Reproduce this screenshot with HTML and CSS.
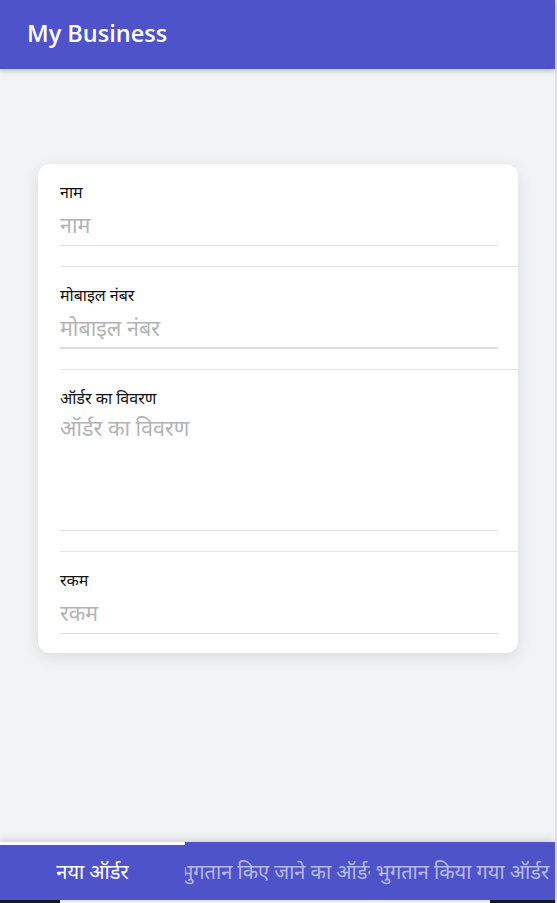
FILE: index.html
```html
<!DOCTYPE html>
<html lang="hi">
<head>
<meta charset="utf-8">
<title>My Business</title>
<link rel="stylesheet" href="styles.css">
</head>
<body>
<div class="app">
  <header class="toolbar">
    <h1 class="title">My Business</h1>
  </header>
  <main class="content">
    <form class="card">
      <div class="item">
        <div class="item-inner">
          <label class="label">नाम</label>
          <div class="input-wrap"><input class="input" placeholder="नाम"></div>
        </div>
      </div>
      <div class="item">
        <div class="item-inner">
          <label class="label">मोबाइल नंबर</label>
          <div class="input-wrap focused"><input class="input" placeholder="मोबाइल नंबर"></div>
        </div>
      </div>
      <div class="item">
        <div class="item-inner">
          <label class="label">ऑर्डर का विवरण</label>
          <div class="input-wrap"><textarea class="input textarea" placeholder="ऑर्डर का विवरण"></textarea></div>
        </div>
      </div>
      <div class="item last">
        <div class="item-inner">
          <label class="label">रकम</label>
          <div class="input-wrap"><input class="input" placeholder="रकम"></div>
        </div>
      </div>
    </form>
  </main>
  <nav class="tabbar">
    <div class="tab active"><span>नया ऑर्डर</span></div>
    <div class="tab"><span>भुगतान किए जाने का ऑर्डर</span></div>
    <div class="tab"><span>भुगतान किया गया ऑर्डर</span></div>
  </nav>
  <div class="navstrip">
    <div class="ns-dark ns-left"></div>
    <div class="ns-light"></div>
    <div class="ns-dark ns-right"></div>
  </div>
</div>
</body>
</html>
```

FILE: styles.css
```css
* { box-sizing: border-box; }
html, body {
  margin: 0;
  padding: 0;
  height: 100%;
  background: #e2e2e4;
}
body {
  font-family: "Noto Sans", "Open Sans", sans-serif;
  overflow: hidden;
}
.app {
  width: 555px;
  height: 903px;
  display: flex;
  flex-direction: column;
  background: #f2f3f5;
  position: relative;
}
.toolbar {
  height: 69px;
  flex: none;
  background: #4f53c9;
  display: flex;
  align-items: center;
  padding-left: 27px;
  box-shadow: 0 2px 5px rgba(0,0,0,0.22);
  position: relative;
  z-index: 2;
}
.title {
  margin: 0;
  color: #fff;
  font-family: "Open Sans", sans-serif;
  font-weight: 600;
  font-size: 23.5px;
  line-height: 1;
  padding-bottom: 1px;
}
.content {
  flex: 1;
  padding-top: 95px;
}
.card {
  width: 480px;
  margin: 0 auto 0 38px;
  background: #fff;
  border-radius: 12px;
  box-shadow: 0 4px 16px rgba(0,0,0,0.10);
  overflow: hidden;
}
.item {
  padding-left: 22px;
}
.item-inner {
  padding-right: 20px;
  padding-top: 17px;
  padding-bottom: 20px;
  border-bottom: 1px solid #e4e4e4;
  display: flex;
  flex-direction: column;
}
.item.last .item-inner {
  border-bottom: 0;
  padding-bottom: 19px;
}
.label {
  font-size: 16px;
  line-height: 22px;
  height: 23px;
  color: #111;
}
.input-wrap {
  border-bottom: 1px solid #dedede;
}
.input-wrap.focused {
  border-bottom: 2px solid #dcdcdc;
}
.input {
  display: block;
  width: 100%;
  border: 0;
  outline: none;
  padding: 5px 0;
  margin: 0;
  height: 41px;
  font-family: inherit;
  font-size: 21.5px;
  line-height: 30px;
  color: #222;
  background: transparent;
}
.focused .input { height: 40px; }
.input::placeholder { color: #b3b3b3; }
.textarea {
  height: 120px;
  resize: none;
  padding-top: 3px;
}
.tabbar {
  flex: none;
  height: 58px;
  background: #4f53c9;
  display: flex;
  position: relative;
  box-shadow: 0 -2px 8px rgba(0,0,0,0.15);
}
.tab {
  width: 185px;
  flex: none;
  overflow: hidden;
  display: flex;
  justify-content: center;
  align-items: center;
  font-size: 20px;
  color: #b8bae9;
  white-space: nowrap;
}
.tab span { flex: none; }
.tab.active {
  color: #fff;
  border-top: 3px solid #fff;
  padding-bottom: 3px;
}
.navstrip {
  flex: none;
  height: 3px;
  display: flex;
}
.ns-dark { background: #1b1b1b; }
.ns-left { width: 60px; }
.ns-light { width: 430px; background: #f2f2f2; }
.ns-right { width: 65px; }
```
